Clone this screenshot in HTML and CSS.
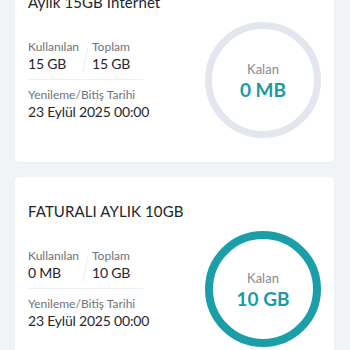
FILE: index.html
```html
<!DOCTYPE html>
<html lang="tr">
<head>
<meta charset="utf-8">
<link rel="stylesheet" href="styles.css">
</head>
<body>
<div class="page">
  <div class="card">
    <div class="title">Aylık 15GB İnternet</div>
    <div class="row">
      <div class="info">
        <div class="usage">
          <div class="col">
            <div class="label">Kullanılan</div>
            <div class="value">15 GB</div>
          </div>
          <div class="slash"></div>
          <div class="col">
            <div class="label">Toplam</div>
            <div class="value">15 GB</div>
          </div>
        </div>
        <div class="divider"></div>
        <div class="label label-date">Yenileme/Bitiş Tarihi</div>
        <div class="value">23 Eylül 2025 00:00</div>
      </div>
      <div class="ring ring-empty">
        <div class="ring-label">Kalan</div>
        <div class="ring-value">0 MB</div>
      </div>
    </div>
  </div>
  <div class="card">
    <div class="title">FATURALI AYLIK 10GB</div>
    <div class="row">
      <div class="info">
        <div class="usage">
          <div class="col">
            <div class="label">Kullanılan</div>
            <div class="value">0 MB</div>
          </div>
          <div class="slash"></div>
          <div class="col">
            <div class="label">Toplam</div>
            <div class="value">10 GB</div>
          </div>
        </div>
        <div class="divider"></div>
        <div class="label label-date">Yenileme/Bitiş Tarihi</div>
        <div class="value">23 Eylül 2025 00:00</div>
      </div>
      <div class="ring ring-full">
        <div class="ring-label">Kalan</div>
        <div class="ring-value">10 GB</div>
      </div>
    </div>
  </div>
</div>
</body>
</html>
```
FILE: styles.css
```css
html, body {
  margin: 0;
  padding: 0;
  background: #f1f3f7;
  font-family: Lato, "Noto Sans", sans-serif;
  overflow: hidden;
}
.page {
  margin-top: -32px;
  padding: 0 16px 0 15px;
  display: flex;
  flex-direction: column;
  gap: 15px;
}
.card {
  background: #fff;
  border-radius: 4px;
  padding: 24px 13px 24px 13px;
  box-shadow: 0 1px 2px rgba(0, 0, 0, 0.03);
}
.title {
  font-size: 15px;
  line-height: 20px;
  color: #22252b;
  letter-spacing: 0.1px;
}
.row {
  margin-top: 10px;
  display: flex;
  align-items: center;
}
.info {
  flex: 1;
  display: flex;
  flex-direction: column;
}
.usage {
  display: flex;
  align-items: stretch;
}
.col {
  display: flex;
  flex-direction: column;
}
.col:first-child {
  width: 52px;
}
.slash {
  width: 12px;
  position: relative;
}
.slash::before {
  content: "";
  position: absolute;
  left: 5px;
  top: 6px;
  width: 1px;
  height: 28px;
  background: #eceef2;
  transform: rotate(12deg);
}
.label {
  font-size: 12px;
  line-height: 16px;
  color: #6f737b;
}
.value {
  font-size: 14px;
  line-height: 18px;
  color: #25282e;
  letter-spacing: -0.2px;
}
.divider {
  width: 115px;
  height: 1px;
  background: #eef0f3;
  margin-top: 6px;
}
.label-date {
  margin-top: 7px;
}
.ring {
  flex: none;
  width: 116px;
  height: 116px;
  box-sizing: border-box;
  border-radius: 50%;
  border: 7px solid #e3e6ee;
  display: flex;
  flex-direction: column;
  align-items: center;
  justify-content: center;
}
.ring-full {
  border-color: #1a9ea8;
  border-width: 8px;
}
.ring-label {
  font-size: 13px;
  line-height: 18px;
  color: #858a93;
}
.ring-value {
  font-size: 19px;
  line-height: 22px;
  font-weight: 700;
  color: #1a9aa5;
  margin-top: 1px;
}
```
